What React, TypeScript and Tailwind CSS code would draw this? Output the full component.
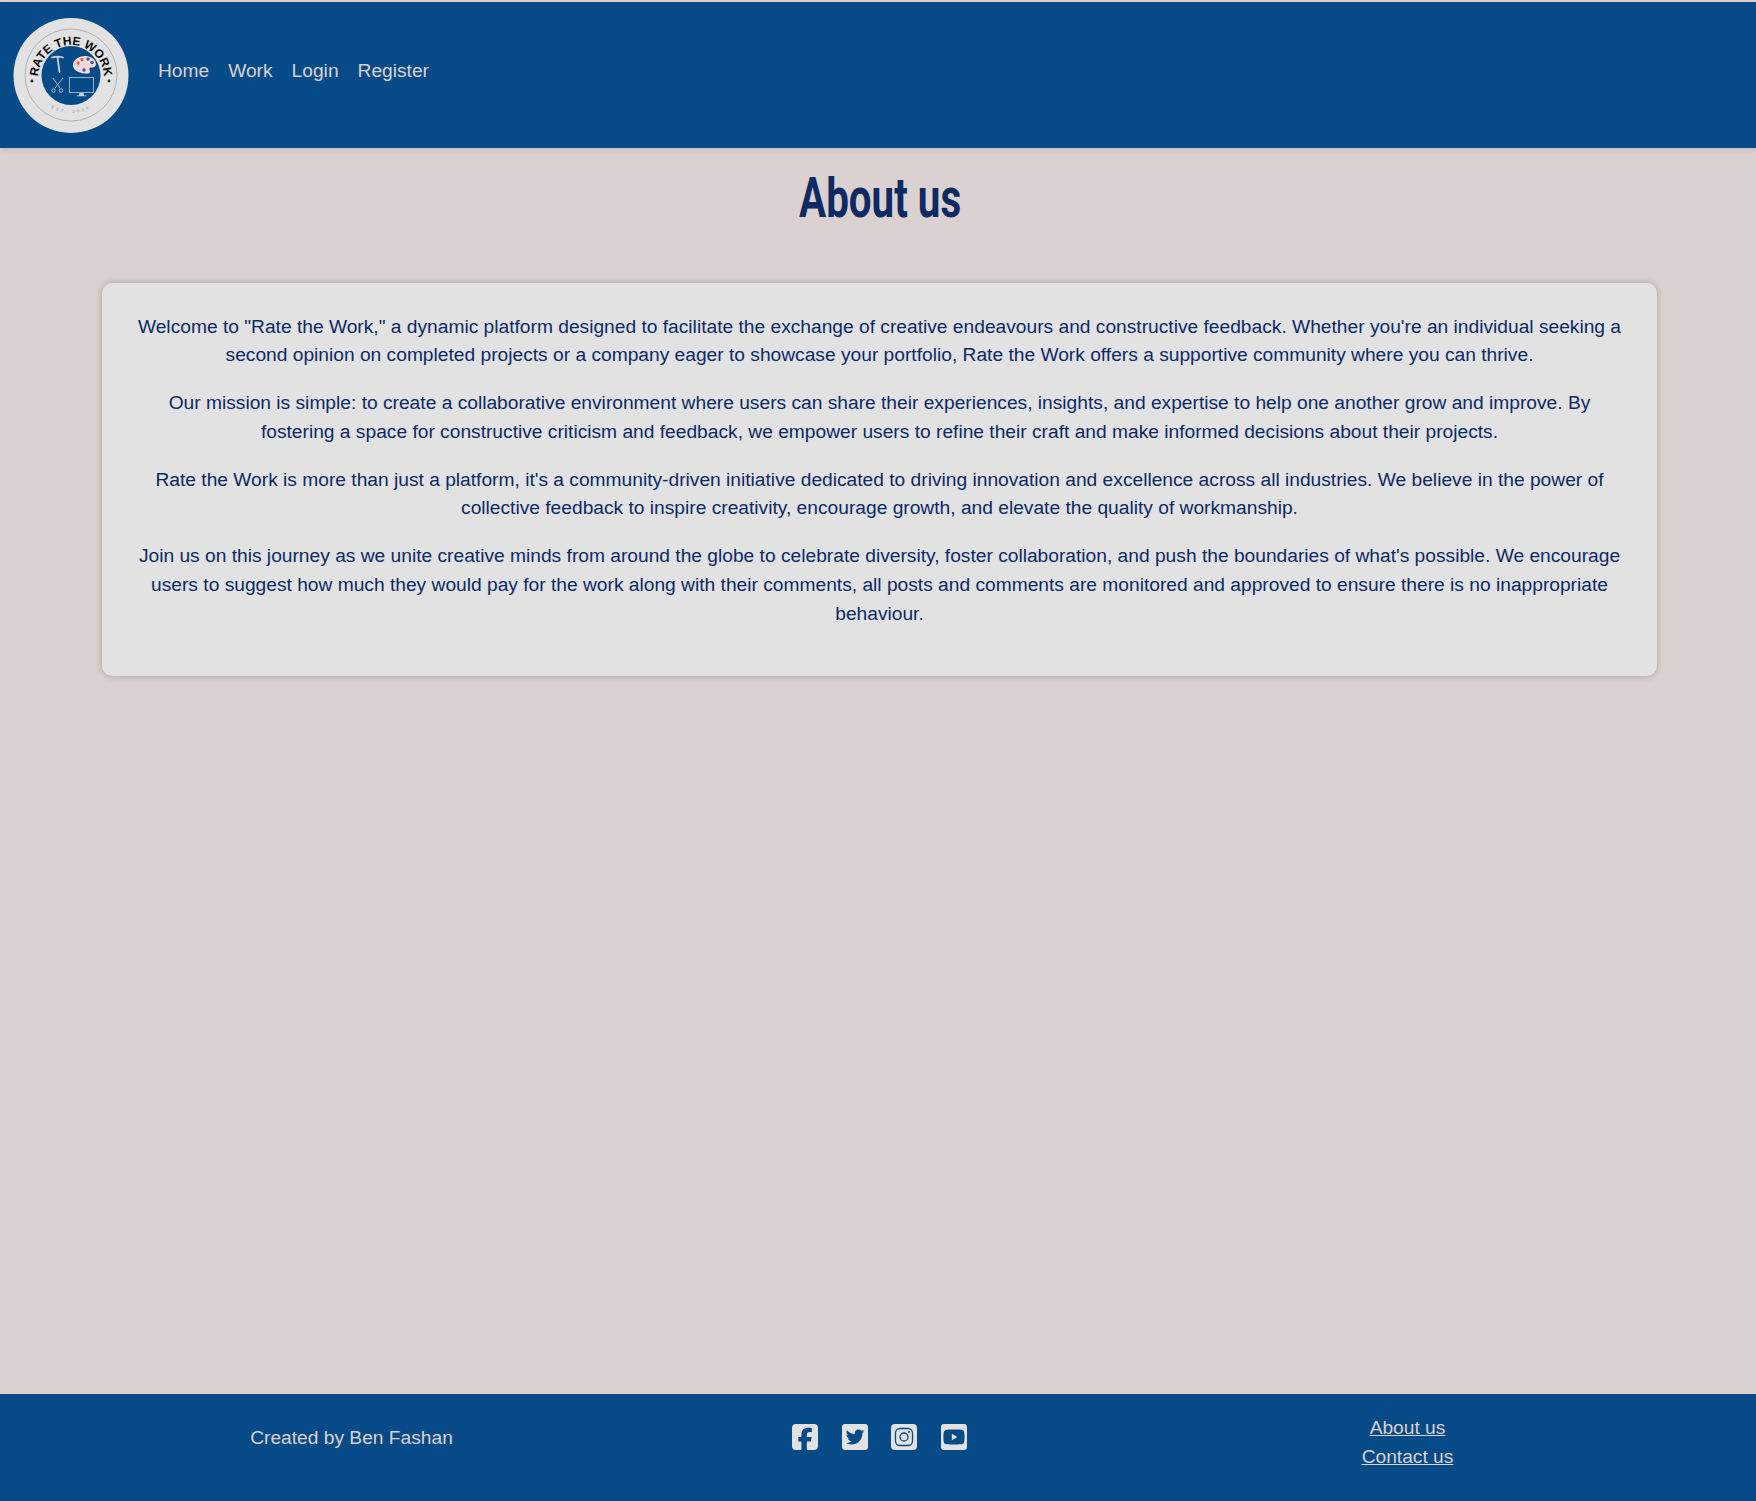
import { FaTwitterSquare, FaYoutubeSquare } from "react-icons/fa";
import { FaSquareFacebook } from "react-icons/fa6";

const links = ["Home", "Work", "Login", "Register"];

const paragraphs = [
  `Welcome to "Rate the Work," a dynamic platform designed to facilitate the exchange of creative endeavours and constructive feedback. Whether you're an individual seeking a second opinion on completed projects or a company eager to showcase your portfolio, Rate the Work offers a supportive community where you can thrive.`,
  `Our mission is simple: to create a collaborative environment where users can share their experiences, insights, and expertise to help one another grow and improve. By fostering a space for constructive criticism and feedback, we empower users to refine their craft and make informed decisions about their projects.`,
  `Rate the Work is more than just a platform, it's a community-driven initiative dedicated to driving innovation and excellence across all industries. We believe in the power of collective feedback to inspire creativity, encourage growth, and elevate the quality of workmanship.`,
  `Join us on this journey as we unite creative minds from around the globe to celebrate diversity, foster collaboration, and push the boundaries of what's possible. We encourage users to suggest how much they would pay for the work along with their comments, all posts and comments are monitored and approved to ensure there is no inappropriate behaviour.`,
];

function Logo() {
  return (
    <svg viewBox="0 0 116 116" className="w-[116px] h-[116px] shrink-0">
      <circle cx="58" cy="57.500" r="57.500" fill="#e2e2e2" />
      <circle cx="58" cy="57" r="46" fill="none" stroke="#77808a" strokeWidth="0.5" />
      <circle cx="58" cy="57.500" r="29.500" fill="#064a87" />
      <defs>
        <path id="logo-top" d="M 25 60 A 33 33 0 0 1 91 60" />
        <path id="logo-bottom" d="M 20 57 A 38 38 0 0 0 96 57" />
      </defs>
      <text fontFamily="Liberation Sans, sans-serif" fontWeight="700" fontSize="12" fill="#0b0b0b">
        <textPath href="#logo-top" startOffset="50%" textAnchor="middle">RATE THE WORK</textPath>
      </text>
      <text fontFamily="Liberation Sans, sans-serif" fontSize="4" letterSpacing="2.600" fill="#77808a">
        <textPath href="#logo-bottom" startOffset="50%" textAnchor="middle">EST. 2024</textPath>
      </text>
      <circle cx="19" cy="63" r="1.400" fill="#222" />
      <circle cx="96" cy="63" r="1.400" fill="#222" />
      {/* hammer */}
      <path d="M39 39.500c3-1 8-1 11 0M44.500 39l2 15" stroke="#c9d3de" strokeWidth="1.800" fill="none" strokeLinecap="round" />
      {/* palette */}
      <path d="M60 46c1-5 7-8.500 13-8 6 .500 10 4 10 8 0 3-3 3.500-5 3.500-2 0-2 2-1 3.500 1 2-2 3-5 2.500-7-.500-13-4-12-9.500z" fill="#f2d9d9" />
      <circle cx="65" cy="45" r="1.700" fill="#e8616a" />
      <circle cx="69" cy="41.500" r="1.700" fill="#e8616a" />
      <circle cx="75" cy="41" r="1.700" fill="#2a5bb0" />
      <circle cx="79" cy="44.500" r="1.700" fill="#2a5bb0" />
      <circle cx="71" cy="52" r="1.700" fill="#2a5bb0" />
      {/* scissors */}
      <path d="M40 60l7 10M50 60L42 70" stroke="#a9b8c9" strokeWidth="1" />
      <circle cx="40.500" cy="72.500" r="1.800" fill="none" stroke="#a9b8c9" strokeWidth="1" />
      <circle cx="48" cy="72.500" r="1.800" fill="none" stroke="#a9b8c9" strokeWidth="1" />
      {/* monitor */}
      <rect x="56.500" y="59.500" width="24" height="15" fill="none" stroke="#a9bccf" strokeWidth="0.900" />
      <path d="M66.500 75h4l.8 2.500h2v.7h-9.600v-.7h2z" fill="#c5d0dc" />
    </svg>
  );
}

function InstagramIcon() {
  return (
    <svg viewBox="0 0 26 26" className="w-[26px] h-[26px]">
      <rect width="26" height="26" rx="4" fill="#e2e2e2" />
      <rect x="4.500" y="4.500" width="17" height="17" rx="4.500" fill="none" stroke="#064a87" strokeWidth="1.300" />
      <circle cx="13" cy="13" r="4" fill="none" stroke="#064a87" strokeWidth="1.300" />
      <circle cx="18" cy="8" r="1" fill="#064a87" />
    </svg>
  );
}

export default function App() {
  return (
    <div className="h-[1501px] overflow-hidden flex flex-col bg-[#dbd1d1] font-['Liberation_Sans',Arial,sans-serif] text-[19.2px] leading-[28.8px]">
      <header className="h-[146px] mt-[2px] bg-[#064a87] flex shrink-0 pl-[13px] pt-[16px] shadow-[0_2px_4px_rgba(0,0,0,0.1)]">
        <Logo />
        <nav className="flex gap-[19px] ml-[29px] pt-[39px] h-fit text-[#dbd1d1]">
          {links.map((link) => (
            <a key={link} href="#">{link}</a>
          ))}
        </nav>
      </header>

      <main className="flex-1 flex flex-col items-center pl-[3px]">
        <h1 className="mt-[20px] text-[56px] leading-[60px] font-bold font-['Roboto',sans-serif] text-[#0e2a63] scale-x-[0.72] pl-[3px]">
          About us
        </h1>
        <section className="mt-[55px] w-[1555px] h-[393px] rounded-[10px] bg-[#e2e2e2] px-[30px] pt-[29.5px] text-center text-[#0b2a66] shadow-[0_0_6px_rgba(0,0,0,0.25)]">
          {paragraphs.map((text, i) => (
            <p key={i} className="mb-[19px]">{text}</p>
          ))}
        </section>
      </main>

      <footer className="h-[107px] bg-[#064a87] text-[#dbd1d1] shrink-0">
        <div className="w-[1584px] mx-auto pl-[3px] grid grid-cols-3 items-start h-full text-center">
          <div className="pt-[30px] pr-[2px]">Created by Ben Fashan</div>
          <div className="flex justify-center gap-[23.7px] pt-[28px] text-[#e2e2e2]">
            <FaSquareFacebook className="w-[26px] h-[30px]" />
            <FaTwitterSquare className="w-[26px] h-[30px]" />
            <div className="h-[30px] flex items-center"><InstagramIcon /></div>
            <FaYoutubeSquare className="w-[26px] h-[30px]" />
          </div>
          <div className="flex flex-col pt-[20px] pl-[2px]">
            <a href="#" className="underline">About us</a>
            <a href="#" className="underline">Contact us</a>
          </div>
        </div>
      </footer>
    </div>
  );
}
